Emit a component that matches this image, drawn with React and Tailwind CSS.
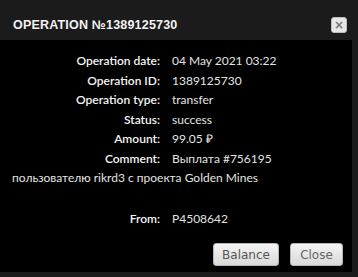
import { useState } from "react"

const rows = [
    { label: "Operation date:", value: "04 May 2021 03:22" },
    { label: "Operation ID:", value: "1389125730" },
    { label: "Operation type:", value: "transfer" },
    { label: "Status:", value: "success" },
    { label: "Amount:", value: "99.05 ₽" },
    { label: "Comment:", value: "Выплата #756195 пользователю rikrd3 с проекта Golden Mines" },
]

function Row({ label, value }) {
    return (
        <div className=" leading-[19.5px]">
            <span className=" inline-block w-[160px] text-right pr-[12px] font-semibold text-[#f4f4f4]">{label}</span>
            <span>{value}</span>
        </div>
    )
}

function App() {
    const [open, setOpen] = useState(true)

    return (
        <div className=" w-[358px] h-[277px] bg-[#1b1b1b] flex flex-col overflow-hidden">
            <div className=" h-[40px] shrink-0 flex items-center justify-between pl-[13px] pr-[11px] pt-[10px]">
                <h2
                    className=" text-[12.5px] font-bold text-[#f2f2f2] tracking-[0.2px]"
                    style={{ fontFamily: "'Liberation Sans', sans-serif" }}
                >
                    OPERATION №1389125730
                </h2>
                <button
                    onClick={() => setOpen(!open)}
                    className=" w-[16px] h-[16px] rounded-[3px] bg-[#e6e6e6] border border-[#bdbdbd] flex items-center justify-center text-[#777] text-[12px] font-bold leading-none"
                    style={{ fontFamily: "'DejaVu Sans', sans-serif" }}
                >
                    ×
                </button>
            </div>
            <div
                className=" w-[352px] h-[232px] bg-black pt-[11px] pl-[12px] pr-[9px] flex flex-col text-[12px] text-[#e4e4e4]"
                style={{ fontFamily: "Lato, 'Open Sans', sans-serif" }}
            >
                {rows.map((row) => (
                    <Row key={row.label} label={row.label} value={row.value} />
                ))}
                <div className=" h-[21px] shrink-0" />
                <Row label="From:" value="P4508642" />
                <div className=" mt-auto mb-[6px] flex justify-end gap-[11px]">
                    <button
                        className=" w-[66px] h-[23px] rounded-[3px] border border-[#b5b5b5] bg-gradient-to-b from-[#f4f4f4] to-[#d9d9d9] text-[#555] text-[12px]"
                        style={{ fontFamily: "'DejaVu Sans', sans-serif" }}
                    >
                        Balance
                    </button>
                    <button
                        className=" w-[53px] h-[23px] rounded-[3px] border border-[#b5b5b5] bg-gradient-to-b from-[#f4f4f4] to-[#d9d9d9] text-[#666] text-[12px]"
                        style={{ fontFamily: "'DejaVu Sans', sans-serif" }}
                    >
                        Close
                    </button>
                </div>
            </div>
        </div>
    )
}

export default App
